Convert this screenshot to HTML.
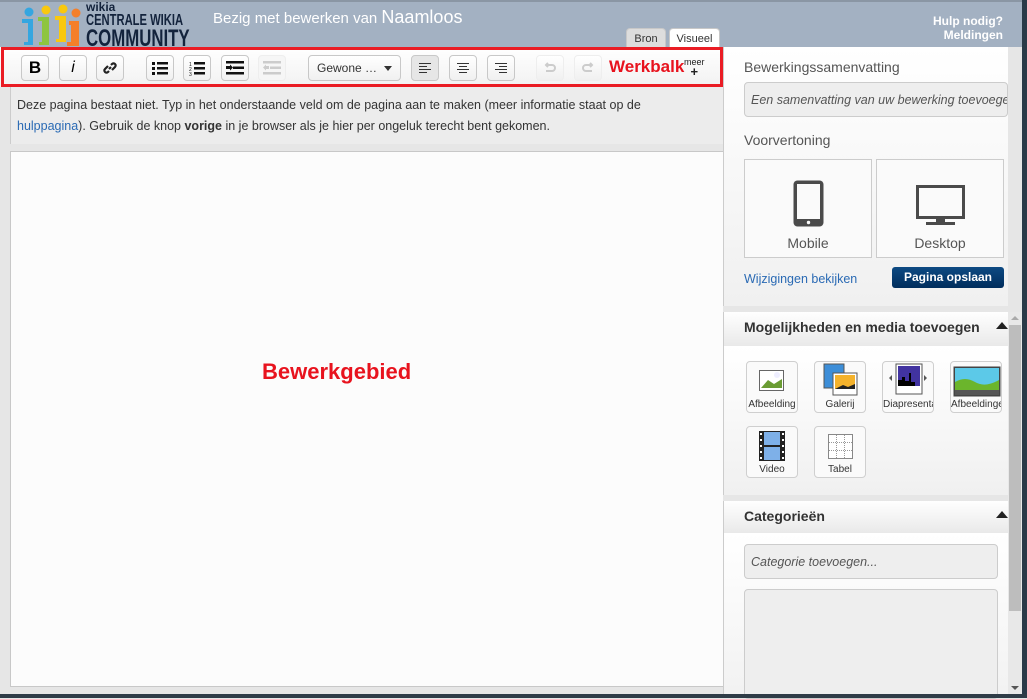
<!DOCTYPE html>
<html><head><meta charset="utf-8"><style>
*{box-sizing:border-box;margin:0;padding:0}
body{width:1027px;height:698px;overflow:hidden;background:#e6e6e6;font-family:"Liberation Sans",Arial,sans-serif;position:relative}
.abs{position:absolute}
#hdr{left:0;top:0;width:1027px;height:47px;background:#a3b1c2;border-top:2px solid #8a96a4}
.btn{position:absolute;top:55px;width:28px;height:26px;border:1px solid #c8c8c8;border-radius:4px;background:linear-gradient(#fff,#f0f0f0);display:flex;align-items:center;justify-content:center}
.ico{position:absolute;width:52px;height:52px;border:1px solid #cfcfcf;border-radius:4px;background:#fafafa;font-size:10px;color:#333;text-align:center}
.ico span{position:absolute;bottom:2px;left:0;width:100%;white-space:nowrap;overflow:hidden}
.ico svg{position:absolute;left:10px;top:4px}
</style></head><body>
<div id="hdr" class="abs"></div>
<svg class="abs" style="left:20px;top:3px" width="62" height="44">
<circle cx="9" cy="9" r="4.5" fill="#35a6e0"/><path d="M2 16h11v26H4v-3h4V20H2z" fill="#35a6e0"/>
<circle cx="26" cy="7" r="4.5" fill="#f9c80e"/><path d="M18 14h11v28h-10v-3h3V18h-4z" fill="#8ec53f"/>
<circle cx="43" cy="6" r="4.5" fill="#f9c80e"/><path d="M35 13h11v26h-10v-3h3V17h-4z" fill="#f9c80e"/>
<circle cx="56" cy="10" r="4.5" fill="#f47f2a"/><path d="M49 18h10v25H47v-4h4V22h-2z" fill="#f47f2a"/>
</svg>
<div class="abs" style="left:86px;top:1px;color:#13233c;font-weight:bold;line-height:1">
<div style="font-size:12px">wikia</div><div style="font-size:16px;transform:scaleX(.7);transform-origin:left;white-space:nowrap">CENTRALE WIKIA</div><div style="font-size:24px;transform:scaleX(.7);transform-origin:left;margin-top:-2px">COMMUNITY</div></div>
<div class="abs" style="left:213px;top:7px;color:#fff;font-size:15px">Bezig met bewerken van <span style="font-size:18px">Naamloos</span></div>
<div class="abs" style="left:626px;top:28px;width:40px;height:19px;background:#ddd;border:1px solid #c8c8c8;border-bottom:none;border-radius:4px 4px 0 0;font-size:11px;color:#333;text-align:center;padding-top:4px">Bron</div>
<div class="abs" style="left:669px;top:28px;width:51px;height:20px;background:#fff;border:1px solid #c8c8c8;border-bottom:none;border-radius:4px 4px 0 0;font-size:11px;color:#333;text-align:center;padding-top:4px">Visueel</div>
<div class="abs" style="right:24px;top:14px;color:#fff;font-size:12px;font-weight:bold;text-align:right;line-height:14px">Hulp nodig?<br>Meldingen</div>
<div class="abs" style="left:0;top:47px;width:724px;height:40px;background:linear-gradient(#fff,#f2f2f2)"></div>
<div class="btn" style="left:21px;font-weight:bold;font-size:17px">B</div>
<div class="btn" style="left:59px;font-style:italic;font-size:16px">i</div>
<div class="btn" style="left:96px"><svg width="16" height="16" viewBox="0 0 16 16" fill="none" stroke="#222" stroke-width="2.2"><path d="M7 9l2-2M6 6l-3 3a2 2 0 003 3l1-1M10 10l3-3a2 2 0 00-3-3l-1 1"/></svg></div>
<div class="btn" style="left:146px"><svg width="16" height="14"><g fill="#111"><rect x="0" y="1" width="3" height="3"/><rect x="5" y="1" width="11" height="2.5"/><rect x="0" y="6" width="3" height="3"/><rect x="5" y="6" width="11" height="2.5"/><rect x="0" y="11" width="3" height="3"/><rect x="5" y="11" width="11" height="2.5"/></g></svg></div>
<div class="btn" style="left:183px"><svg width="16" height="15"><g fill="#111" font-size="5" font-family="Liberation Sans"><text x="0" y="5">1</text><text x="0" y="10">2</text><text x="0" y="15">3</text><rect x="5" y="1" width="11" height="2.5"/><rect x="5" y="6" width="11" height="2.5"/><rect x="5" y="11" width="11" height="2.5"/></g></svg></div>
<div class="btn" style="left:221px"><svg width="18" height="14"><g fill="#111"><rect x="0" y="0" width="18" height="2.5"/><rect x="7" y="5.5" width="11" height="2.5"/><rect x="0" y="11" width="18" height="2.5"/><path d="M0 5h4V3.5l3 3-3 3V8H0z"/></g></svg></div>
<div class="btn" style="left:258px;border-color:#eee;background:#f6f6f6"><svg width="18" height="14"><g fill="#ccc"><rect x="0" y="0" width="18" height="2.5"/><rect x="7" y="5.5" width="11" height="2.5"/><rect x="0" y="11" width="18" height="2.5"/><path d="M6 5H3V3.5l-3 3 3 3V8h3z"/></g></svg></div>
<div class="btn" style="left:308px;width:93px;justify-content:flex-start;padding-left:8px;font-size:12px;color:#333">Gewone …<span style="position:absolute;right:8px;top:10px;border:4px solid transparent;border-top:5px solid #333"></span></div>
<div class="btn" style="left:411px;background:#e6e6e6"><svg width="12" height="11"><g fill="#333"><rect y="0" width="12" height="1"/><rect y="3" width="8" height="1"/><rect y="6" width="12" height="1"/><rect y="9" width="8" height="1"/></g></svg></div>
<div class="btn" style="left:449px"><svg width="12" height="11"><g fill="#333"><rect y="0" width="12" height="1"/><rect x="2" y="3" width="8" height="1"/><rect y="6" width="12" height="1"/><rect x="2" y="9" width="8" height="1"/></g></svg></div>
<div class="btn" style="left:487px"><svg width="12" height="11"><g fill="#333"><rect y="0" width="12" height="1"/><rect x="4" y="3" width="8" height="1"/><rect y="6" width="12" height="1"/><rect x="4" y="9" width="8" height="1"/></g></svg></div>
<div class="btn" style="left:536px;border-color:#eee"><svg width="14" height="12" fill="none" stroke="#ccc" stroke-width="2"><path d="M3 3h6a3 3 0 010 6H3M5 1L3 3l2 2"/></svg></div>
<div class="btn" style="left:574px;border-color:#eee"><svg width="14" height="12" fill="none" stroke="#ccc" stroke-width="2"><path d="M11 3H5a3 3 0 000 6h6M9 1l2 2-2 2"/></svg></div>
<div class="abs" style="left:609px;top:57px;color:#e8131e;font-size:17px;font-weight:bold">Werkbalk</div>
<div class="abs" style="left:684px;top:58px;font-size:9px;color:#222;line-height:9px;text-align:center">meer<br><b style="font-size:13px">+</b></div>
<div class="abs" style="left:1px;top:47px;width:722px;height:40px;border:3px solid #ea1c24"></div>
<div class="abs" style="left:10px;top:87px;width:714px;height:57px;background:#ececec;border-left:1px solid #ccc;padding:8px 40px 8px 6px;font-size:12.5px;line-height:21px;color:#333">Deze pagina bestaat niet. Typ in het onderstaande veld om de pagina aan te maken (meer informatie staat op de <span style="color:#2a6ab4">hulppagina</span>). Gebruik de knop <b>vorige</b> in je browser als je hier per ongeluk terecht bent gekomen.</div>
<div class="abs" style="left:10px;top:151px;width:714px;height:536px;background:#fcfcfc;border:1px solid #c8c8c8;border-right:none"></div>
<div class="abs" style="left:262px;top:359px;color:#e8131e;font-size:22px;font-weight:bold">Bewerkgebied</div>
<div class="abs" style="left:723px;top:47px;width:285px;height:259px;background:linear-gradient(#fff,#f0f0f0);border-left:1px solid #ccc"></div>
<div class="abs" style="left:744px;top:59px;font-size:14px;color:#555">Bewerkingssamenvatting</div>
<div class="abs" style="left:744px;top:82px;width:264px;height:35px;background:#eee;border:1px solid #ccc;border-radius:4px;font-size:12.5px;font-style:italic;color:#555;padding:10px 6px;white-space:nowrap;overflow:hidden">Een samenvatting van uw bewerking toevoegen</div>
<div class="abs" style="left:744px;top:132px;font-size:14px;color:#555">Voorvertoning</div>
<div class="abs" style="left:744px;top:159px;width:128px;height:99px;border:1px solid #ccc;background:#fafafa"><svg style="position:absolute;left:47px;top:19px" width="33" height="49"><rect x="1.5" y="1.5" width="30" height="46" rx="4" fill="#4a4a4a"/><rect x="5" y="5" width="23" height="35" fill="#fafafa"/><circle cx="16.5" cy="43.5" r="1.7" fill="#fafafa"/></svg><div style="position:absolute;top:75px;width:100%;text-align:center;font-size:14px;color:#555">Mobile</div></div>
<div class="abs" style="left:876px;top:159px;width:128px;height:99px;border:1px solid #ccc;background:#fafafa"><svg style="position:absolute;left:39px;top:25px" width="49" height="41"><rect x="1.5" y="1.5" width="46" height="31" fill="none" stroke="#4a4a4a" stroke-width="3"/><rect x="20" y="33" width="9" height="5" fill="#4a4a4a"/><rect x="10" y="37" width="29" height="3" fill="#4a4a4a"/></svg><div style="position:absolute;top:75px;width:100%;text-align:center;font-size:14px;color:#555">Desktop</div></div>
<div class="abs" style="left:744px;top:272px;font-size:12.5px;color:#2a6ab4">Wijzigingen bekijken</div>
<div class="abs" style="left:892px;top:267px;width:112px;height:21px;background:linear-gradient(#0d4a83,#002d5c);border-radius:3px;color:#fff;font-size:12px;font-weight:bold;text-align:center;line-height:21px">Pagina opslaan</div>
<div class="abs" style="left:723px;top:306px;width:285px;height:6px;background:#e6e6e6"></div>
<div class="abs" style="left:723px;top:312px;width:285px;height:34px;background:linear-gradient(#fff,#e9e9e9);border-left:1px solid #ccc"></div>
<div class="abs" style="left:744px;top:319px;font-size:14px;font-weight:bold;color:#333">Mogelijkheden en media toevoegen</div>
<div class="abs" style="left:996px;top:322px;border:6px solid transparent;border-bottom:7px solid #222;border-top:none"></div>
<div class="abs" style="left:723px;top:346px;width:285px;height:149px;background:linear-gradient(#fff,#f0f0f0);border-left:1px solid #ccc"></div>
<div class="ico" style="left:746px;top:361px"><svg width="30" height="26" style="left:12px;top:8px"><rect x="0.5" y="0.5" width="24" height="20" fill="#fff" stroke="#666"/><path d="M2 18l7-8 6 4 8-5v9H2z" fill="#6a9c33"/><circle cx="18" cy="5" r="3" fill="#eef"/></svg><span>Afbeelding</span></div>
<div class="ico" style="left:814px;top:361px"><svg width="36" height="34" style="left:8px;top:1px"><rect x="1" y="1" width="20" height="24" fill="#3d8ed8" stroke="#555"/><rect x="10" y="10" width="24" height="22" fill="#fff" stroke="#555"/><rect x="12" y="12" width="20" height="14" fill="#f4b22b"/><path d="M12 26l8-4 5 2 7-3v5z" fill="#222"/></svg><span>Galerij</span></div>
<div class="ico" style="left:882px;top:361px"><svg width="44" height="34" style="left:3px;top:1px"><rect x="10" y="1" width="26" height="30" fill="#fff" stroke="#555"/><rect x="12" y="3" width="22" height="20" fill="#4133a0"/><path d="M12 23v-6h4v-3h3v4h4v-8h2v9h4v4z" fill="#000"/><path d="M3 15l3-3v6zM41 15l-3-3v6z" fill="#555"/></svg><span>Diapresentatie</span></div>
<div class="ico" style="left:950px;top:361px"><svg width="48" height="34" style="left:2px;top:4px"><rect x="0.5" y="0.5" width="47" height="30" fill="#444"/><rect x="2" y="2" width="44" height="22" fill="#5cc9e8"/><path d="M2 24v-8q10-6 20 0t24-2v10z" fill="#6bb52c"/><rect x="2" y="24" width="44" height="5" fill="#555"/></svg><span>Afbeeldingen</span></div>
<div class="ico" style="left:746px;top:426px"><svg width="28" height="30" style="left:12px;top:4px"><rect width="26" height="30" fill="#222"/><rect x="5" y="1" width="16" height="13" fill="#7eb0e8"/><rect x="5" y="16" width="16" height="13" fill="#7eb0e8"/><g fill="#fff"><rect x="1" y="2" width="2" height="2"/><rect x="1" y="8" width="2" height="2"/><rect x="1" y="14" width="2" height="2"/><rect x="1" y="20" width="2" height="2"/><rect x="1" y="26" width="2" height="2"/><rect x="23" y="2" width="2" height="2"/><rect x="23" y="8" width="2" height="2"/><rect x="23" y="14" width="2" height="2"/><rect x="23" y="20" width="2" height="2"/><rect x="23" y="26" width="2" height="2"/></g></svg><span>Video</span></div>
<div class="ico" style="left:814px;top:426px"><svg width="26" height="26" style="left:13px;top:7px"><rect x="0.5" y="0.5" width="24" height="24" fill="#fff" stroke="#888"/><path d="M8.5 1v23M16.5 1v23M1 8.5h23M1 16.5h23" stroke="#999" stroke-dasharray="1 1"/></svg><span>Tabel</span></div>
<div class="abs" style="left:723px;top:495px;width:285px;height:6px;background:#e6e6e6"></div>
<div class="abs" style="left:723px;top:501px;width:285px;height:32px;background:linear-gradient(#fff,#e9e9e9);border-left:1px solid #ccc"></div>
<div class="abs" style="left:744px;top:508px;font-size:14px;font-weight:bold;color:#333">Categorieën</div>
<div class="abs" style="left:996px;top:511px;border:6px solid transparent;border-bottom:7px solid #222;border-top:none"></div>
<div class="abs" style="left:723px;top:533px;width:285px;height:161px;background:linear-gradient(#fff,#f2f2f2);border-left:1px solid #ccc"></div>
<div class="abs" style="left:744px;top:544px;width:254px;height:35px;background:#eee;border:1px solid #ccc;border-radius:4px;font-size:12.5px;font-style:italic;color:#555;padding:10px 6px">Categorie toevoegen...</div>
<div class="abs" style="left:744px;top:589px;width:254px;height:110px;background:#eee;border:1px solid #ccc;border-radius:4px"></div>
<div class="abs" style="left:1008px;top:312px;width:14px;height:382px;background:#e8e8e8"></div>
<div class="abs" style="left:1009px;top:325px;width:12px;height:286px;background:#bdbdbd"></div>
<div class="abs" style="left:1011px;top:316px;border:4px solid transparent;border-bottom:4px solid #aaa;border-top:none"></div>
<div class="abs" style="left:1011px;top:686px;border:4px solid transparent;border-top:4px solid #555;border-bottom:none"></div>
<div class="abs" style="left:1022px;top:0;width:5px;height:698px;background:#2a3a48"></div>
<div class="abs" style="left:0;top:694px;width:1027px;height:4px;background:#2f3c47"></div>
</body></html>
